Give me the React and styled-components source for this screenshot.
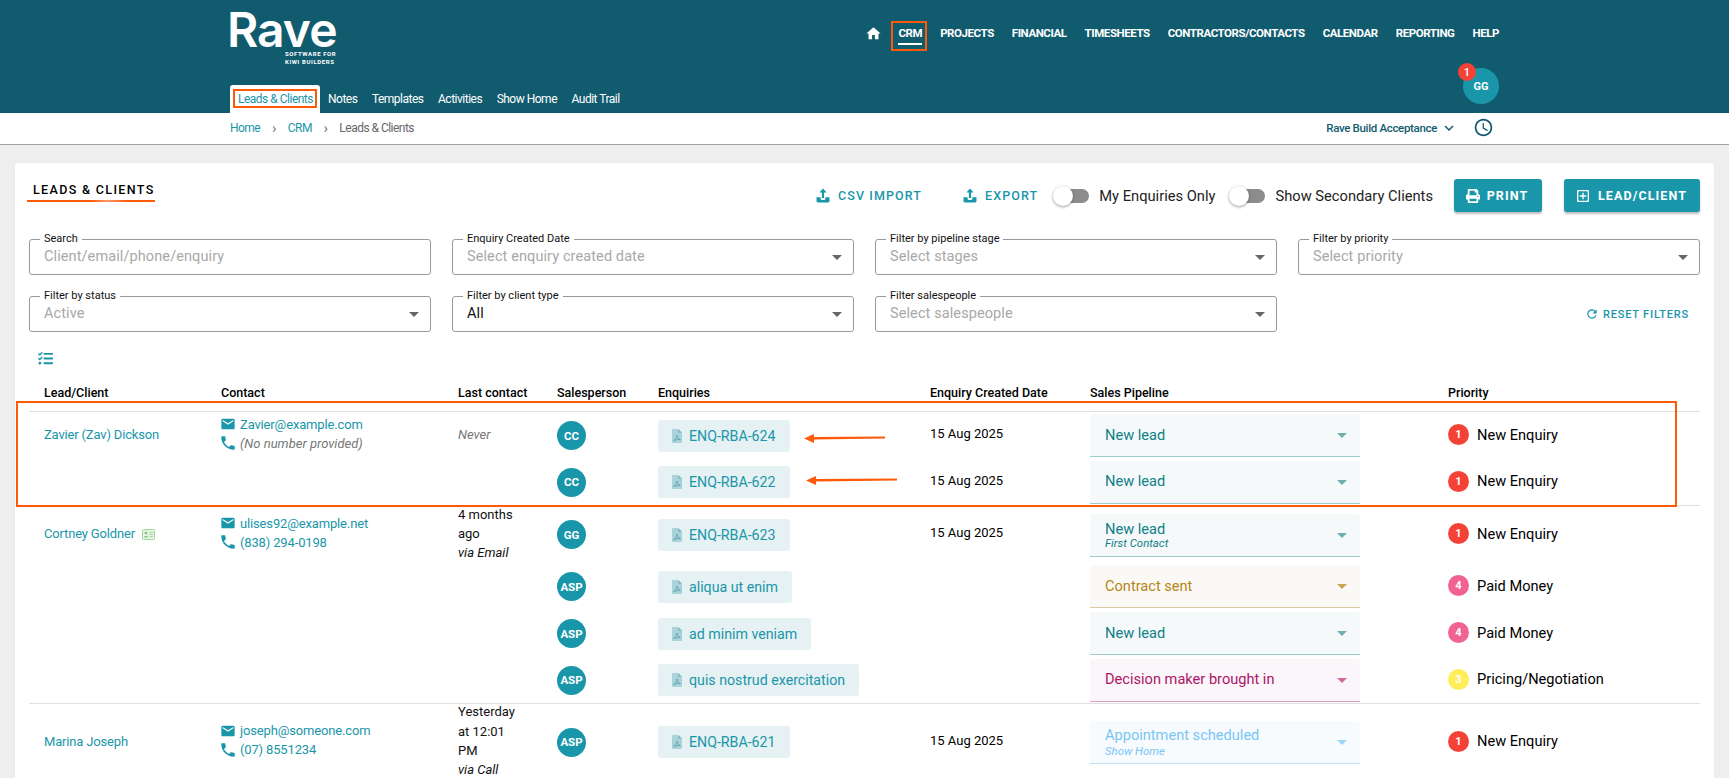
import React from "react";
import styled, { createGlobalStyle, css } from "styled-components";
import { MdHome, MdEmail, MdPhone, MdOutlineAddBox, MdRefresh, MdKeyboardArrowDown, MdAccessTime, MdArrowDropDown } from "react-icons/md";
import { FaPrint, FaTasks } from "react-icons/fa";

const TEAL = "#1a96aa";
const DARK = "#115b6f";
const ORANGE = "#ff5a0a";

const Global = createGlobalStyle`
  html, body { margin: 0; padding: 0; height: 778px; overflow: hidden; background: #eeeeee; }
  body { font-family: Roboto, "Liberation Sans", sans-serif; color: #000; }
  * { box-sizing: border-box; }
`;

const Header = styled.header`
  background: ${DARK};
  height: 113px;
`;
const HeaderInner = styled.div`
  width: 1269px;
  margin: 0 auto;
  height: 113px;
  display: flex;
  justify-content: space-between;
`;
const Brand = styled.div`
  display: flex;
  flex-direction: column;
  justify-content: space-between;
`;
const Logo = styled.div`
  padding-top: 10px;
  width: 108px;
  color: #fff;
`;
const LogoWord = styled.div`
  font-family: Inter, sans-serif;
  font-weight: 600;
  font-size: 48px;
  line-height: 40px;
  letter-spacing: -1px;
  margin-left: -3px;
`;
const LogoTag = styled.div`
  font-family: Roboto, sans-serif;
  font-weight: 700;
  font-size: 6px;
  line-height: 7.5px;
  letter-spacing: 0.6px;
  margin-left: 55px;
  white-space: nowrap;
`;
const Tabs = styled.nav`
  display: flex;
  align-items: flex-end;
  gap: 14.5px;
  height: 28px;
`;
const Tab = styled.a`
  position: relative;
  display: flex;
  align-items: center;
  height: 28px;
  font-size: 12px;
  letter-spacing: -0.5px;
  color: ${(p) => (p.$active ? TEAL : "#fff")};
  background: ${(p) => (p.$active ? "#fff" : "transparent")};
  padding: ${(p) => (p.$active ? "0 7px 0 8px" : "0")};
  margin-right: ${(p) => (p.$active ? "-6.5px" : "0")};
  border-radius: 3px 3px 0 0;
`;
const Annotation = styled.span`
  position: absolute;
  border: 2px solid ${ORANGE};
  pointer-events: none;
  ${(p) => p.$inset}
`;
const RightHead = styled.div`
  display: flex;
  flex-direction: column;
  align-items: flex-end;
`;
const MainNav = styled.nav`
  display: flex;
  align-items: flex-start;
  gap: 18px;
  margin-top: 21px;
  height: 30px;
`;
const NavItem = styled.a`
  position: relative;
  display: flex;
  align-items: center;
  height: 24px;
  font-size: 11.5px;
  font-weight: 700;
  letter-spacing: -0.43px;
  color: #fff;
  ${(p) => p.$active && css`
    &::before {
      content: "";
      position: absolute;
      left: 0;
      right: 0;
      top: 22px;
      height: 2px;
      background: #fff;
    }
  `}
`;
const HomeIcon = styled(MdHome)`
  font-size: 17px;
  color: #fff;
  margin-right: -2px;
`;
const AvatarWrap = styled.div`
  position: relative;
  margin-top: 17px;
`;
const UserAvatar = styled.div`
  width: 36px;
  height: 36px;
  border-radius: 50%;
  background: ${TEAL};
  color: #fff;
  font-size: 11px;
  font-weight: 700;
  display: flex;
  align-items: center;
  justify-content: center;
`;
const Badge = styled.span`
  position: absolute;
  left: -5px;
  top: -5px;
  width: 18px;
  height: 18px;
  border-radius: 50%;
  background: #f44336;
  color: #fff;
  font-size: 11px;
  font-weight: 500;
  display: flex;
  align-items: center;
  justify-content: center;
`;

const CrumbBar = styled.div`
  background: #fff;
  height: 32px;
  border-bottom: 1px solid #a0a0a0;
`;
const CrumbInner = styled.div`
  width: 1269px;
  margin: 0 auto;
  height: 31px;
  padding-bottom: 2px;
  display: flex;
  align-items: center;
  justify-content: space-between;
`;
const Crumbs = styled.div`
  display: flex;
  align-items: center;
  font-size: 12px;
  letter-spacing: -0.52px;
  color: #666;
`;
const CrumbLink = styled.a`
  color: ${TEAL};
`;
const CrumbSep = styled.span`
  width: 27.5px;
  text-align: center;
  color: #777;
  font-size: 15px;
  line-height: 12px;
`;
const Tenant = styled.div`
  display: flex;
  align-items: center;
  color: ${DARK};
  font-size: 11.5px;
  font-weight: 500;
  letter-spacing: -0.33px;
  margin-right: 5px;
`;
const TenantChevron = styled(MdKeyboardArrowDown)`
  font-size: 18px;
  margin-left: 3px;
`;
const ClockIcon = styled(MdAccessTime)`
  font-size: 21px;
  margin-left: 15px;
`;

const Page = styled.main`
  padding: 18px 15px 0;
`;
const Card = styled.section`
  position: relative;
  background: #fff;
  border-radius: 4px 4px 0 0;
  padding: 16px 14px 0;
  box-shadow: 0 0 2px rgba(0, 0, 0, 0.06);
`;
const TopBar = styled.div`
  display: flex;
  align-items: center;
  height: 33px;
`;
const TitleBox = styled.div`
  align-self: flex-start;
  margin-left: -2px;
  width: 128px;
  padding: 3px 0 0 6px;
  height: 23px;
  border-bottom: 2px solid ${ORANGE};
  border-image: linear-gradient(90deg, ${ORANGE} 50%, #ff9a66 62%, ${ORANGE} 78%) 1;
  font-size: 12.5px;
  line-height: 16px;
  font-weight: 500;
  letter-spacing: 1.35px;
  white-space: nowrap;
`;
const Actions = styled.div`
  margin-left: auto;
  display: flex;
  align-items: center;
`;
const TextAction = styled.a`
  display: flex;
  align-items: center;
  gap: 8px;
  color: ${TEAL};
  font-size: 12.5px;
  font-weight: 500;
  letter-spacing: 1.1px;
  margin-right: ${(p) => p.$mr}px;
`;
const SwitchWrap = styled.div`
  display: flex;
  align-items: center;
  margin-right: ${(p) => p.$mr}px;
`;
const Track = styled.span`
  position: relative;
  display: block;
  width: 34px;
  height: 14px;
  border-radius: 7px;
  background: #8c8c8c;
  margin-right: 10px;
`;
const Thumb = styled.span`
  position: absolute;
  left: -2px;
  top: -3px;
  width: 20px;
  height: 20px;
  border-radius: 50%;
  background: #fff;
  box-shadow: 0 1px 3px rgba(0, 0, 0, 0.4);
`;
const SwitchLabel = styled.span`
  font-size: 14.7px;
  color: #222;
`;
const PrimaryButton = styled.button`
  display: flex;
  align-items: center;
  justify-content: center;
  gap: 7px;
  height: 33px;
  width: ${(p) => p.$w}px;
  margin-left: ${(p) => p.$ml}px;
  padding: 0 2px 0 0;
  border: 0;
  border-radius: 3px;
  background: ${TEAL};
  color: #fff;
  font-family: inherit;
  font-size: 12.5px;
  font-weight: 700;
  letter-spacing: 1.1px;
  box-shadow: 0 2px 2px rgba(0, 0, 0, 0.25);
`;

const Filters = styled.div`
  display: grid;
  grid-template-columns: repeat(4, 402px);
  column-gap: 21px;
  row-gap: 21px;
  margin-top: 27px;
`;
const Field = styled.div`
  position: relative;
  height: 36px;
  border: 1px solid #9a9a9a;
  border-radius: 3px;
  display: flex;
  align-items: center;
  padding: 0 4px 0 14px;
`;
const FieldLabel = styled.label`
  position: absolute;
  left: 10px;
  top: -8px;
  padding: 0 4px;
  background: #fff;
  font-size: 11px;
  line-height: 13px;
  color: #111;
`;
const FieldValue = styled.span`
  font-size: 14.5px;
  color: ${(p) => (p.$filled ? "#111" : "#a8a8a8")};
  margin-top: -2px;
  letter-spacing: 0.1px;
`;
const FieldArrow = styled(MdArrowDropDown)`
  font-size: 24px;
  color: #666;
  margin-left: auto;
`;
const ResetCell = styled.div`
  display: flex;
  align-items: center;
  justify-content: flex-end;
  padding-right: 11px;
`;
const ResetLink = styled.a`
  display: flex;
  align-items: center;
  gap: 4px;
  color: ${TEAL};
  font-size: 11px;
  font-weight: 500;
  letter-spacing: 0.8px;
`;
const ListToggle = styled.div`
  color: ${TEAL};
  font-size: 15px;
  line-height: 0;
  margin: 19px 0 0 9px;
  height: 16px;
`;

const cols = "192px 237px 99px 101px 272px 160px 358px 1fr";
const TableHead = styled.div`
  display: grid;
  grid-template-columns: ${cols};
  margin-top: 17px;
  height: 28px;
  border-bottom: 1px solid #e0e0e0;
`;
const HeadCell = styled.div`
  font-size: 12.5px;
  font-weight: 500;
  padding-left: ${(p) => (p.$first ? "15px" : "0")};
  line-height: 18px;
`;
const Row = styled.div`
  display: grid;
  grid-template-columns: ${cols};
  align-items: center;
  height: ${(p) => p.$h}px;
  border-bottom: ${(p) => (p.$end ? "1px solid #e0e0e0" : "0")};
`;
const NameCell = styled.div`
  padding-left: 15px;
  display: flex;
  align-items: center;
  gap: 7px;
  color: ${TEAL};
  font-size: 13px;
  letter-spacing: -0.17px;
  margin-top: -2px;
`;
const IdIcon = styled.svg`
  width: 13px;
  height: 11px;
  margin-top: 1px;
`;
const ContactCell = styled.div`
  font-size: 13px;
  line-height: 19px;
  margin-top: -4px;
`;
const ContactLine = styled.div`
  display: flex;
  align-items: center;
  color: ${(p) => (p.$muted ? "#777" : TEAL)};
  font-style: ${(p) => (p.$muted ? "italic" : "normal")};
  letter-spacing: ${(p) => (p.$muted ? "0" : "-0.15px")};
`;
const ContactIcon = styled.span`
  display: inline-flex;
  align-items: center;
  justify-content: center;
  width: 18px;
  color: ${TEAL};
  font-size: ${(p) => p.$size}px;
  margin-left: -2px;
  margin-right: 3px;
`;
const LastCell = styled.div`
  font-size: 13px;
  line-height: 19.3px;
  margin-top: -2px;
  color: ${(p) => (p.$muted ? "#777" : "#111")};
  font-style: ${(p) => (p.$muted ? "italic" : "normal")};
  width: 62px;
`;
const Via = styled.div`
  font-style: italic;
`;
const Person = styled.div`
  width: 29px;
  height: 29px;
  border-radius: 50%;
  background: ${TEAL};
  color: #fff;
  font-size: 11.5px;
  font-weight: 700;
  display: flex;
  align-items: center;
  justify-content: center;
`;
const Chip = styled.a`
  display: inline-flex;
  align-items: center;
  gap: 7px;
  height: 32px;
  padding: 0 14px 0 14px;
  border-radius: 3px;
  background: #e6f1f3;
  color: ${TEAL};
  font-size: 14.2px;
  justify-self: start;
`;
const PdfIcon = styled.svg`
  width: 10px;
  height: 14px;
`;
const DateCell = styled.div`
  font-size: 13px;
  margin-top: -4px;
`;
const pipe = {
  lead: { fg: "#0f8088", bg: "#f5f9f9", line: "#9dcdcb", arrow: "#6fb0ac" },
  contract: { fg: "#b58617", bg: "#fbf9f5", line: "#dcc8a2", arrow: "#c8a550" },
  decision: { fg: "#ad1466", bg: "#fbf6fa", line: "#e09fbf", arrow: "#cf6a9e" },
  appt: { fg: "#79c5f3", bg: "#f7fbfe", line: "#bde2f5", arrow: "#9ad6f8" },
};
const Select = styled.div`
  width: 270px;
  height: 43px;
  margin-top: ${(p) => p.$mt || 0}px;
  background: ${(p) => pipe[p.$k].bg};
  border-bottom: 1px solid ${(p) => pipe[p.$k].line};
  border-radius: 3px 3px 0 0;
  padding: 0 6px 0 15px;
  display: flex;
  align-items: center;
  justify-content: space-between;
  color: ${(p) => pipe[p.$k].fg};
`;
const SelectText = styled.div`
  font-size: 14.6px;
  line-height: 15px;
`;
const SelectSub = styled.div`
  font-size: 11.4px;
  font-style: italic;
  line-height: 12px;
  margin-top: ${(p) => (p.$k === "appt" ? 2 : 0)}px;
`;
const SelectArrow = styled(MdArrowDropDown)`
  font-size: 24px;
  color: ${(p) => pipe[p.$k].arrow};
`;
const PriorityCell = styled.div`
  display: flex;
  align-items: center;
  gap: 8px;
  font-size: 14.6px;
  margin-top: -2px;
`;
const Dot = styled.span`
  width: 21px;
  height: 21px;
  border-radius: 50%;
  background: ${(p) => p.$c};
  color: #fff;
  font-size: 11px;
  font-weight: 700;
  display: flex;
  align-items: center;
  justify-content: center;
`;
const HighlightBox = styled.div`
  position: absolute;
  left: 1px;
  top: 238px;
  width: 1661px;
  height: 106px;
  border: 2px solid ${ORANGE};
  pointer-events: none;
`;
const ArrowMark = styled.svg`
  position: absolute;
  overflow: visible;
  pointer-events: none;
`;

const UploadIcon = () => (
  <svg width="14" height="15" viewBox="0 0 14 15" fill="currentColor">
    <path d="M7 0.5 L10.6 4.6 H8.1 V10 H5.9 V4.6 H3.4 Z" />
    <path d="M0.5 9.2 H4.6 V10.8 C4.6 11.5 5.1 12 5.8 12 H8.2 C8.9 12 9.4 11.5 9.4 10.8 V9.2 H13.5 V13 C13.5 13.8 12.9 14.4 12.1 14.4 H1.9 C1.1 14.4 0.5 13.8 0.5 13 Z" />
  </svg>
);
const Pdf = () => (
  <PdfIcon viewBox="0 0 10 14">
    <path d="M1 0 H6.2 L10 3.8 V13 C10 13.6 9.6 14 9 14 H1 C0.4 14 0 13.6 0 13 V1 C0 0.4 0.4 0 1 0 Z" fill="#a9d2d9" />
    <path d="M6.2 0 L10 3.8 H6.2 Z" fill="#7fb9c4" />
    <path d="M1.6 11.6 C3.4 10.6 4.6 8.6 5 6 C5.3 8.6 6.4 10 8.4 10.4 C6.2 10.3 3.8 10.8 1.6 11.6 Z" fill="none" stroke="#5fa6b4" strokeWidth="0.9" />
  </PdfIcon>
);

const leads = [
  {
    name: "Zavier (Zav) Dickson",
    email: "Zavier@example.com",
    phone: "(No number provided)",
    muted: true,
    last: ["Never"],
    lastMuted: true,
    heights: [47, 47],
    subs: [
      { p: "CC", e: "ENQ-RBA-624", d: "15 Aug 2025", k: "lead", t: "New lead", n: 1 },
      { p: "CC", e: "ENQ-RBA-622", d: "15 Aug 2025", k: "lead", t: "New lead", n: 1 },
    ],
  },
  {
    name: "Cortney Goldner",
    id: true,
    email: "ulises92@example.net",
    phone: "(838) 294-0198",
    last: ["4 months", "ago"],
    via: "via Email",
    heights: [57, 47, 47, 47],
    subs: [
      { p: "GG", e: "ENQ-RBA-623", d: "15 Aug 2025", k: "lead", t: "New lead", s: "First Contact", n: 1, mt: 2 },
      { p: "ASP", e: "aliqua ut enim", k: "contract", t: "Contract sent", n: 4 },
      { p: "ASP", e: "ad minim veniam", k: "lead", t: "New lead", n: 4 },
      { p: "ASP", e: "quis nostrud exercitation", k: "decision", t: "Decision maker brought in", n: 3 },
    ],
  },
  {
    name: "Marina Joseph",
    email: "joseph@someone.com",
    phone: "(07) 8551234",
    last: ["Yesterday", "at 12:01", "PM"],
    via: "via Call",
    heights: [77],
    subs: [
      { p: "ASP", e: "ENQ-RBA-621", d: "15 Aug 2025", k: "appt", t: "Appointment scheduled", s: "Show Home", n: 1, mt: 1 },
    ],
  },
];
const priorities = {
  1: { c: "#f44336", t: "New Enquiry" },
  4: { c: "#f06292", t: "Paid Money" },
  3: { c: "#ffee58", t: "Pricing/Negotiation" },
};
const filters = [
  ["Search", "Client/email/phone/enquiry"],
  ["Enquiry Created Date", "Select enquiry created date", true],
  ["Filter by pipeline stage", "Select stages", true],
  ["Filter by priority", "Select priority", true],
  ["Filter by status", "Active", true],
  ["Filter by client type", "All", true, true],
  ["Filter salespeople", "Select salespeople", true],
];
const heads = ["Lead/Client", "Contact", "Last contact", "Salesperson", "Enquiries", "Enquiry Created Date", "Sales Pipeline", "Priority"];
const navItems = ["PROJECTS", "FINANCIAL", "TIMESHEETS", "CONTRACTORS/CONTACTS", "CALENDAR", "REPORTING", "HELP"];
const tabItems = ["Notes", "Templates", "Activities", "Show Home", "Audit Trail"];

export default function App() {
  return (
    <>
      <Global />
      <Header>
        <HeaderInner>
          <Brand>
            <Logo>
              <LogoWord>Rave</LogoWord>
              <LogoTag>SOFTWARE FOR<br />KIWI BUILDERS</LogoTag>
            </Logo>
            <Tabs>
              <Tab $active>
                Leads &amp; Clients
                <Annotation $inset="left: 3px; right: 3px; top: 4px; bottom: 5px;" />
              </Tab>
              {tabItems.map((t) => <Tab key={t}>{t}</Tab>)}
            </Tabs>
          </Brand>
          <RightHead>
            <MainNav>
              <NavItem><HomeIcon /></NavItem>
              <NavItem $active>
                CRM
                <Annotation $inset="left: -7px; right: -5px; top: 0; bottom: -6px;" />
              </NavItem>
              {navItems.map((n) => <NavItem key={n}>{n}</NavItem>)}
            </MainNav>
            <AvatarWrap>
              <UserAvatar>GG</UserAvatar>
              <Badge>1</Badge>
            </AvatarWrap>
          </RightHead>
        </HeaderInner>
      </Header>
      <CrumbBar>
        <CrumbInner>
          <Crumbs>
            <CrumbLink>Home</CrumbLink>
            <CrumbSep>›</CrumbSep>
            <CrumbLink>CRM</CrumbLink>
            <CrumbSep>›</CrumbSep>
            <span>Leads &amp; Clients</span>
          </Crumbs>
          <Tenant>
            Rave Build Acceptance
            <TenantChevron />
            <ClockIcon />
          </Tenant>
        </CrumbInner>
      </CrumbBar>
      <Page>
        <Card>
          <TopBar>
            <TitleBox>LEADS &amp; CLIENTS</TitleBox>
            <Actions>
              <TextAction $mr={41}><UploadIcon />CSV IMPORT</TextAction>
              <TextAction $mr={17}><UploadIcon />EXPORT</TextAction>
              <SwitchWrap $mr={16}><Track><Thumb /></Track><SwitchLabel>My Enquiries Only</SwitchLabel></SwitchWrap>
              <SwitchWrap $mr={0}><Track><Thumb /></Track><SwitchLabel>Show Secondary Clients</SwitchLabel></SwitchWrap>
              <PrimaryButton $w={88} $ml={21}><FaPrint size={14} />PRINT</PrimaryButton>
              <PrimaryButton $w={136} $ml={22}><MdOutlineAddBox size={16} />LEAD/CLIENT</PrimaryButton>
            </Actions>
          </TopBar>
          <Filters>
            {filters.map(([label, value, arrow, filled]) => (
              <Field key={label}>
                <FieldLabel>{label}</FieldLabel>
                <FieldValue $filled={filled}>{value}</FieldValue>
                {arrow && <FieldArrow />}
              </Field>
            ))}
            <ResetCell>
              <ResetLink><MdRefresh size={14} />RESET FILTERS</ResetLink>
            </ResetCell>
          </Filters>
          <ListToggle><FaTasks /></ListToggle>
          <TableHead>
            {heads.map((h, i) => <HeadCell key={h} $first={i === 0}>{h}</HeadCell>)}
          </TableHead>
          {leads.map((lead) =>
            lead.subs.map((s, i) => {
              const pr = priorities[s.n];
              return (
                <Row key={s.e} $h={lead.heights[i]} $end={i === lead.subs.length - 1}>
                  <NameCell>
                    {i === 0 && lead.name}
                    {i === 0 && lead.id && (
                      <IdIcon viewBox="0 0 13 11">
                        <rect x="0.5" y="0.5" width="12" height="10" rx="1" fill="#e6f4e3" stroke="#a5d6a0" />
                        <circle cx="4" cy="4" r="1.5" fill="#8cc786" />
                        <path d="M1.8 8.5 C2 6.6 6 6.6 6.2 8.5 Z" fill="#8cc786" />
                        <path d="M7.6 3.5 H11 M7.6 5.5 H11 M7.6 7.5 H11" stroke="#a5d6a0" />
                      </IdIcon>
                    )}
                  </NameCell>
                  <ContactCell>
                    {i === 0 && (
                      <>
                        <ContactLine><ContactIcon $size={16}><MdEmail /></ContactIcon>{lead.email}</ContactLine>
                        <ContactLine $muted={lead.muted}><ContactIcon $size={18}><MdPhone /></ContactIcon>{lead.phone}</ContactLine>
                      </>
                    )}
                  </ContactCell>
                  <LastCell $muted={lead.lastMuted}>
                    {i === 0 && lead.last.map((l) => <div key={l}>{l}</div>)}
                    {i === 0 && lead.via && <Via>{lead.via}</Via>}
                  </LastCell>
                  <Person>{s.p}</Person>
                  <Chip><Pdf />{s.e}</Chip>
                  <DateCell>{s.d}</DateCell>
                  <Select $k={s.k} $mt={s.mt}>
                    <div>
                      <SelectText>{s.t}</SelectText>
                      {s.s && <SelectSub $k={s.k}>{s.s}</SelectSub>}
                    </div>
                    <SelectArrow $k={s.k} />
                  </Select>
                  <PriorityCell><Dot $c={pr.c}>{s.n}</Dot>{pr.t}</PriorityCell>
                </Row>
              );
            })
          )}
          <HighlightBox />
          <ArrowMark style={{ left: 789, top: 270.5 }} width="82" height="9">
            <path d="M0 4.5 L10 0 V3 L81 2.6 V4.6 L10 5.6 V9 Z" fill={ORANGE} />
          </ArrowMark>
          <ArrowMark style={{ left: 791, top: 312.5 }} width="92" height="9">
            <path d="M0 4.5 L10 0 V3 L91 2.6 V4.6 L10 5.6 V9 Z" fill={ORANGE} />
          </ArrowMark>
        </Card>
      </Page>
    </>
  );
}
